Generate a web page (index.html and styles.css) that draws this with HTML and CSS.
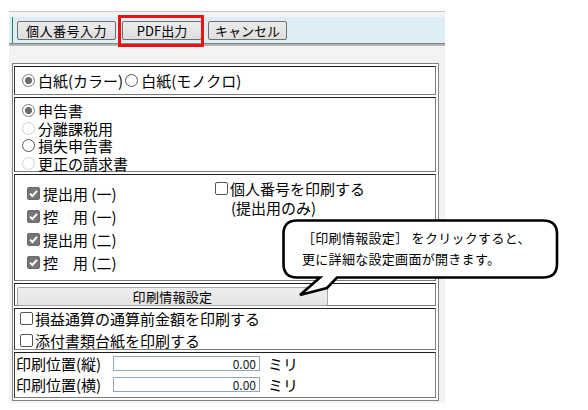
FILE: index.html
```html
<!DOCTYPE html>
<html lang="ja">
<head>
<meta charset="utf-8">
<title>印刷設定</title>
<link rel="stylesheet" href="styles.css">
</head>
<body>
<div class="app">
  <div class="bar">
    <div class="bar-inner">
      <button class="btn btn-mynum">個人番号入力</button>
      <button class="btn btn-pdf">PDF出力<span class="mark"></span></button>
      <button class="btn btn-cancel">キャンセル</button>
    </div>
  </div>
  <div class="content">
    <div class="frame">
      <div class="sec sec-paper">
        <label class="opt opt-color"><span class="radio on"></span>白紙(カラー)</label>
        <label class="opt"><span class="radio"></span>白紙(モノクロ)</label>
      </div>
      <div class="sec sec-kind">
        <label class="opt"><span class="radio on"></span>申告書</label>
        <label class="opt"><span class="radio dis"></span>分離課税用</label>
        <label class="opt"><span class="radio"></span>損失申告書</label>
        <label class="opt"><span class="radio dis"></span>更正の請求書</label>
      </div>
      <div class="sec sec-copies">
        <div class="col-left">
          <label class="row"><span class="cb on"><svg viewBox="0 0 13 13" width="13" height="13"><path d="M3 6.6 L5.4 9 L10 3.8" fill="none" stroke="#fff" stroke-width="1.9"/></svg></span>提出用 (一)</label>
          <label class="row"><span class="cb on"><svg viewBox="0 0 13 13" width="13" height="13"><path d="M3 6.6 L5.4 9 L10 3.8" fill="none" stroke="#fff" stroke-width="1.9"/></svg></span>控　用 (一)</label>
          <label class="row"><span class="cb on"><svg viewBox="0 0 13 13" width="13" height="13"><path d="M3 6.6 L5.4 9 L10 3.8" fill="none" stroke="#fff" stroke-width="1.9"/></svg></span>提出用 (二)</label>
          <label class="row"><span class="cb on"><svg viewBox="0 0 13 13" width="13" height="13"><path d="M3 6.6 L5.4 9 L10 3.8" fill="none" stroke="#fff" stroke-width="1.9"/></svg></span>控　用 (二)</label>
        </div>
        <div class="col-right">
          <label class="row-r"><span class="cb"></span>個人番号を印刷する</label>
          <div class="row-r sub">(提出用のみ)</div>
        </div>
      </div>
      <div class="sec sec-btn">
        <button class="btn btn-wide">印刷情報設定</button>
      </div>
      <div class="sec sec-extra">
        <label class="row-e"><span class="cb"></span>損益通算の通算前金額を印刷する</label>
        <label class="row-e"><span class="cb"></span>添付書類台紙を印刷する</label>
      </div>
      <div class="sec sec-pos">
        <div class="row-p"><span class="plabel">印刷位置(縦)</span><span class="field">0.00</span><span class="unit">ミリ</span></div>
        <div class="row-p"><span class="plabel">印刷位置(横)</span><span class="field">0.00</span><span class="unit">ミリ</span></div>
      </div>
    </div>
  </div>
  <div class="callout">
    <svg class="callout-shape" viewBox="0 0 282 82" width="282" height="82">
      <path d="M17 3.5 H263 Q277 3.5 277 17 V47 Q277 60.5 263 60.5 H57 L47 71 L20 78 L40 60.5 H17 Q3.5 60.5 3.5 47 V17 Q3.5 3.5 17 3.5 Z" fill="#fff" stroke="#000" stroke-width="2.6" stroke-linejoin="miter"/>
    </svg>
    <div class="callout-text">
      <div class="l1">［印刷情報設定］ をクリックすると、</div>
      <div class="l2">更に詳細な設定画面が開きます。</div>
    </div>
  </div>
</div>
</body>
</html>
```

FILE: styles.css
```css
* { box-sizing: border-box; }
html, body { margin: 0; padding: 0; background: #fff; }
body {
  font-family: "Noto Sans CJK JP", "Noto Sans", sans-serif;
  font-size: 15px;
  color: #000;
}
.app {
  position: relative;
  margin: 11px 0 0 9px;
  width: 436px;
  background: #f3f3f3;
  border-top: 1px solid #c8c8c8;
  padding-top: 5px;
}
.bar {
  height: 27px;
  background: #ddeef6;
  padding-left: 3px;
  border-bottom: 1px solid #858585;
}
.bar-inner {
  height: 100%;
  border-left: 1px solid #2f7d52;
  padding: 4px 0 0 4px;
  display: flex;
  gap: 6px;
  align-items: flex-start;
}
.btn {
  position: relative;
  height: 19px;
  padding: 0;
  margin: 0;
  border: 1px solid #6f6f6f;
  border-radius: 2px;
  background: linear-gradient(#ececec, #dedede);
  font-family: "Noto Sans CJK JP", "Noto Sans", sans-serif;
  font-size: 13px;
  line-height: 17px;
  color: #000;
  text-align: center;
}
.btn-mynum { width: 99px; letter-spacing: 0.5px; }
.btn-pdf { width: 80px; }
.btn-cancel { width: 79px; }
.mark {
  position: absolute;
  top: -7px;
  left: -5px;
  right: -3px;
  bottom: -8px;
  border: 3px solid #ee1111;
}
.content {
  border-top: 2px solid #b3b3b3;
  padding: 17px 6px 2px 3px;
}
.frame {
  border: 1px solid #828282;
  background: #fff;
  padding: 2px 2px 2px 1px;
  display: flex;
  flex-direction: column;
  gap: 2px;
}
.sec {
  border: 1px solid;
  border-color: #1e1e1e #7c7c7c #7c7c7c #3a3a3a;
}
.opt, .row, .row-r, .row-e { display: flex; align-items: center; }
.radio {
  flex: none;
  width: 13px;
  height: 13px;
  border-radius: 50%;
  border: 1px solid #555;
  background: #fff;
  margin-right: 3px;
}
.radio.on {
  border-color: #7d7d7d;
  background: radial-gradient(circle, #6c6c6c 0 3.3px, #fff 3.8px);
}
.radio.dis { border-color: #cfcfcf; }
.cb {
  flex: none;
  width: 13px;
  height: 13px;
  border: 1px solid #555;
  border-radius: 2px;
  background: #fff;
  margin-right: 2px;
  display: flex;
}
.cb svg { margin: -1px; }
.cb.on { background: #767676; border-color: #6a6a6a; }

.sec-paper {
  height: 29px;
  display: flex;
  align-items: center;
  padding-left: 7px;
}
.opt-color { margin-right: 2px; }

.sec-kind {
  height: 75px;
  padding: 4px 0 0 7px;
  line-height: 17.5px;
}

.sec-copies {
  height: 107px;
  display: flex;
}
.col-left {
  width: 200px;
  padding: 7px 0 0 12px;
}
.row { height: 23px; }
.row .cb { margin-right: 3px; }
.col-right {
  padding-top: 4px;
  line-height: 19px;
}
.sub { padding-left: 16px; }

.sec-btn {
  height: 23px;
  padding: 1px 0 0 2px;
}
.btn-wide {
  width: 311px;
  border-color: #a9a9a9;
  background: linear-gradient(#f0f0f0, #e3e3e3);
  letter-spacing: 0.3px;
}

.sec-extra {
  height: 42px;
  display: flex;
  flex-direction: column;
  justify-content: center;
  padding-left: 5px;
}
.row-e { height: 22px; flex: none; }

.sec-pos {
  height: 46px;
  padding-left: 1px;
}
.row-p {
  height: 21px;
  display: flex;
  align-items: center;
}
.plabel { width: 97px; }
.field {
  width: 147px;
  height: 15px;
  border: 1px solid #8ea6c2;
  background: #fff;
  font-size: 12px;
  line-height: 13px;
  text-align: right;
  padding-right: 3px;
  color: #222;
}
.unit { margin-left: 8px; }

.callout {
  position: absolute;
  left: 271px;
  top: 205px;
  width: 282px;
  height: 82px;
}
.callout-shape { display: block; }
.callout-text {
  position: absolute;
  left: 22px;
  top: 10px;
  font-size: 13px;
  line-height: 21px;
  letter-spacing: 0.3px;
  white-space: nowrap;
}
.l1 { margin-left: 0; }
```
